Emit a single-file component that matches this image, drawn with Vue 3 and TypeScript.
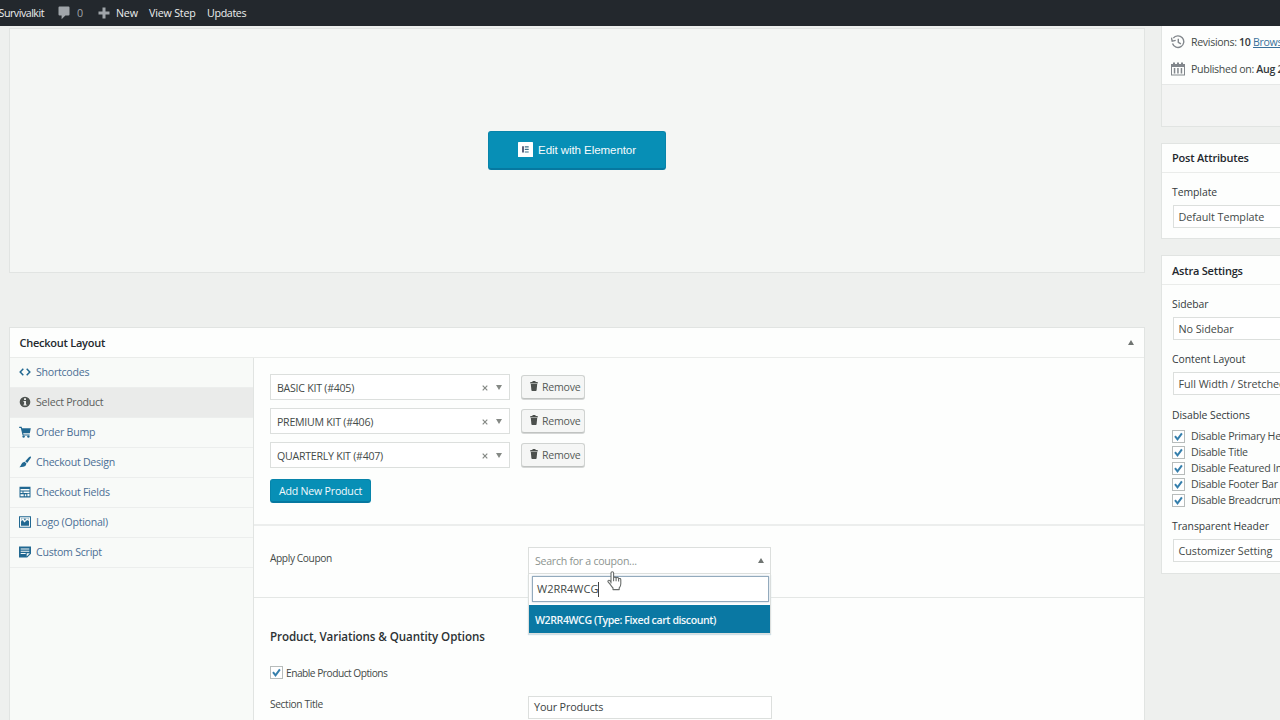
<script setup lang="ts">
interface Tab { label: string; icon: string; active?: boolean }

const tabs: Tab[] = [
  { label: 'Shortcodes', icon: 'code' },
  { label: 'Select Product', icon: 'info', active: true },
  { label: 'Order Bump', icon: 'cart' },
  { label: 'Checkout Design', icon: 'brush' },
  { label: 'Checkout Fields', icon: 'fields' },
  { label: 'Logo (Optional)', icon: 'image' },
  { label: 'Custom Script', icon: 'script' },
]
const products: string[] = ['BASIC KIT (#405)', 'PREMIUM KIT (#406)', 'QUARTERLY KIT (#407)']
const disabled: string[] = [
  'Disable Primary Header',
  'Disable Title',
  'Disable Featured Image',
  'Disable Footer Bar',
  'Disable Breadcrumb',
]
</script>

<template>
  <div class="screen">
    <header class="bar">
      <span class="site">Survivalkit</span>
      <svg class="bubble" viewBox="0 0 12 14"><path d="M1.5 0.5h9q1 0 1 1v7q0 1-1 1H7.4L3.6 13.3V9.5H1.5q-1 0-1-1v-7q0-1 1-1z" fill="#a0a5aa" /></svg>
      <span class="count">0</span>
      <svg class="plus" viewBox="0 0 12 12"><path d="M4.5 0.5h3v4h4v3h-4v4h-3v-4h-4v-3h4z" fill="#a0a5aa" /></svg>
      <span class="new">New</span>
      <span class="view">View Step</span>
      <span class="upd">Updates</span>
    </header>

    <div class="page">
      <main class="main">
        <section class="editor">
          <button class="elementor">
            <svg width="15" height="15" viewBox="0 0 15 15"><rect width="15" height="15" rx="0.6" fill="#fff" /><path d="M5 4.2v6.4" stroke="#272d50" stroke-width="1.5" /><path d="M6.8 4.8h3.9M6.8 7.4h3.9M6.8 10h3.9" stroke="#3c6f88" stroke-width="1.2" /></svg>
            <span>Edit with Elementor</span>
          </button>
        </section>

        <section class="checkout">
          <div class="box-head">
            <h2>Checkout Layout</h2>
            <i class="tri up"></i>
          </div>
          <div class="checkout-body">
            <nav class="tabs">
              <a v-for="t in tabs" :key="t.label" class="tab" :class="{ active: t.active }">
                <svg viewBox="0 0 12 12" fill="currentColor">
                  <path v-if="t.icon === 'code'" d="M4.3 2.8 1.2 6l3.1 3.2M7.7 2.8 10.8 6 7.7 9.2" fill="none" stroke="currentColor" stroke-width="1.5" />
                  <template v-else-if="t.icon === 'info'">
                    <circle cx="6" cy="6" r="5.3" /><path d="M5 2.3h2v1.6H5zM4.5 4.9H7v3.7h.7v1H4.4v-1h.7V5.9h-.6z" fill="#eaebea" />
                  </template>
                  <template v-else-if="t.icon === 'cart'">
                    <path d="M.2.8h2.4l.5 1.5h8.7l-1 5H4.2l.3 1.1h6.1v1.1H3.6L1.8 1.9H.2z" /><circle cx="4.6" cy="10.6" r="1.2" /><circle cx="9.4" cy="10.6" r="1.2" />
                  </template>
                  <path v-else-if="t.icon === 'brush'" d="M11.7.5q.7.6-.3 2.1L8.2 6.9 6.2 5.2 9.9 1.3q1.1-1.2 1.8-.8zM5.5 5.8l2 1.8q-.4 2.8-3.1 3.1-2 .3-4 .5 1.3-.9 1.8-2.6.7-2.4 3.3-2.8z" />
                  <path v-else-if="t.icon === 'fields'" fill-rule="evenodd" d="M.5.8h11v10.6H.5zM1.5 3v1.5h9V3zM1.5 5.6v1.5h2V5.6zM4.5 5.6v1.5h6V5.6zM1.5 8.2v2.1h3.2V8.2zM5.8 8.2v2.1h1.5V8.2zM8.4 7.7v2.6h2.1V7.7z" />
                  <path v-else-if="t.icon === 'image'" fill-rule="evenodd" d="M0 .3h12v11.5H0zM1 1.3v9.5h10V1.3zM2 2.2h8v7.6H2zM2.3 2.4v3l1.4-1.3 1.6 2.4 3-2.6 1.5 1.4V2.4zM5.2 2.8h1.4v1.4H5.2z" />
                  <path v-else fill-rule="evenodd" d="M0 .5h12v7.2L8.2 11.6H0zM1.7 2.5v1.1h8.6V2.5zM1.7 4.8v.9h8.6v-.9zM1.7 7v.9h5V7zM7.7 7.3v3.2l3.1-3.2z" />
                </svg>
                <span>{{ t.label }}</span>
              </a>
            </nav>

            <div class="content">
              <div class="products">
                <div v-for="p in products" :key="p" class="product">
                  <div class="select2">
                    <span class="value">{{ p }}</span>
                    <svg class="x" viewBox="0 0 6 6"><path d="M.7.7l4.6 4.6M5.3.7.7 5.3" stroke="#858985" stroke-width="1.2" /></svg>
                    <i class="tri down"></i>
                  </div>
                  <button class="remove">
                    <svg viewBox="0 0 8 10"><path d="M2.5 0h3v.9h2.2v1.5H.3V.9h2.2zM.8 3h6.4l-.6 6.2q-.1.8-.8.8H2.2q-.7 0-.8-.8z" fill="#4c504d" /></svg>
                    <span>Remove</span>
                  </button>
                </div>
                <button class="add"><span>Add New Product</span></button>
              </div>

              <div class="coupon">
                <label>Apply Coupon</label>
                <div class="combo">
                  <div class="combo-top"><span>Search for a coupon...</span><i class="tri up"></i></div>
                  <div class="dropdown">
                    <div class="search"><span>W2RR4WCG</span><i class="caret"></i></div>
                    <div class="option"><span>W2RR4WCG (Type: Fixed cart discount)</span></div>
                  </div>
                  <svg class="hand" viewBox="0 0 15 20"><path d="M4 12V2.1Q4 .7 5.3.7t1.3 1.4v5q0-1 1.2-1t1.3 1.1q.2-.8 1.2-.8 1.2 0 1.3 1.2 2-.6 2.2 1.1v4.1q0 2.6-1.6 4.2v1.6H6v-1.6Q4.6 15.5 3.2 13.4L.9 10.6Q.7 9.4 1.8 9.2T4 11zM6.6 7v3.3M9.1 7.3v3M11.6 7.8v2.6" fill="#fff" stroke="#696d6b" stroke-width="1.1" stroke-linejoin="round" /></svg>
                </div>
              </div>

              <div class="options">
                <h3>Product, Variations &amp; Quantity Options</h3>
                <div class="enable">
                  <b class="check"><svg viewBox="0 0 11 11"><path d="M2 5.2l2.5 3.2L8.9 2.4" /></svg></b>
                  <span>Enable Product Options</span>
                </div>
                <div class="title-row">
                  <label>Section Title</label>
                  <div class="input"><span>Your Products</span></div>
                </div>
              </div>
            </div>
          </div>
        </section>
      </main>

      <aside class="side">
        <section class="publish">
          <div class="rows">
            <div class="meta">
              <svg viewBox="0 0 14 14"><path d="M2.3 3.2A5.8 5.8 0 1 1 1.5 8.6M.4 2.6l.8 3.5 3.5-.7M7.3 3.7v3.6l2.6 1.6" fill="none" stroke="#82878c" stroke-width="1.4" /></svg>
              <span class="rev">Revisions: <strong>10</strong> <a>Browse</a></span>
            </div>
            <div class="meta">
              <svg viewBox="0 0 14 14"><path fill-rule="evenodd" d="M0 2h2V.5h2V2h2V.5h2V2h2V.5h2V2h2v11.5H0zM1 5v7.5h12V5zM2.8 6h1.5v5.5H2.8zM6.2 6h1.5v5.5H6.2zM9.7 6h1.5v5.5H9.7z" fill="#82878c" /></svg>
              <span class="pub">Published on: <strong>Aug 2</strong></span>
            </div>
          </div>
        </section>

        <section class="box attributes">
          <h2>Post Attributes</h2>
          <div class="box-body">
            <h4>Template</h4>
            <div class="select"><span>Default Template</span></div>
          </div>
        </section>

        <section class="box astra">
          <h2>Astra Settings</h2>
          <div class="box-body">
            <h4>Sidebar</h4>
            <div class="select"><span>No Sidebar</span></div>
            <h4>Content Layout</h4>
            <div class="select layout"><span>Full Width / Stretched</span></div>
            <h4>Disable Sections</h4>
            <ul>
              <li v-for="d in disabled" :key="d">
                <b class="check"><svg viewBox="0 0 11 11"><path d="M2 5.2l2.5 3.2L8.9 2.4" /></svg></b>
                <span>{{ d }}</span>
              </li>
            </ul>
            <h4>Transparent Header</h4>
            <div class="select"><span>Customizer Setting</span></div>
          </div>
        </section>
      </aside>
    </div>
  </div>
</template>

<style>
html, body { margin: 0; overflow: hidden; }
</style>

<style scoped>
* { box-sizing: border-box; }
.screen {
  width: 1280px; height: 720px; overflow: hidden; display: flex; flex-direction: column;
  background: #eef0ee; color: #444a48; white-space: nowrap;
  font: 10.6px/16px "Open Sans", "Noto Sans", sans-serif; letter-spacing: -0.25px;
}
h2, h3, h4, ul { margin: 0; padding: 0; list-style: none; }
svg { display: block; flex: none; }
button { font: inherit; letter-spacing: inherit; margin: 0; padding: 0; }

.bar { flex: none; height: 26px; background: #23282d; color: #eceeee; display: flex; align-items: center; font-size: 10.7px; font-weight: 500; letter-spacing: -0.2px; }
.bar span { flex: none; }
.site { display: flex; justify-content: flex-end; width: 44px; letter-spacing: -0.5px; }
.bubble { width: 12px; height: 14px; margin-left: 14px; }
.bar .count { width: 21px; margin-left: 7px; color: #a0a5aa; font-weight: 400; }
.plus { width: 12px; height: 12px; }
.new { width: 33px; margin-left: 6px; }
.view { width: 58px; }
.upd { letter-spacing: -0.35px; }

.page { flex: 1; min-height: 0; display: flex; gap: 16px; padding-left: 9px; }
.main { width: 1136px; flex: none; padding-top: 2px; display: flex; flex-direction: column; gap: 54px; }
.editor { flex: none; height: 245px; border: 1px solid #e1e4e2; background: #f4f6f4; display: flex; justify-content: center; align-items: flex-start; padding-top: 102px; }
.elementor {
  width: 178px; height: 39px; border: 1px solid #0784aa; border-bottom: 2px solid #0678a0; border-radius: 3px;
  background: #078fb6; color: #f5fbfd; font: 11.6px/16px "Liberation Sans", sans-serif; letter-spacing: -0.1px;
  display: flex; align-items: center; justify-content: center; gap: 5px;
}
.elementor svg { margin-top: -2px; }

.checkout { flex: 1; min-height: 0; border: 1px solid #e1e4e2; border-bottom: 0; background: #fdfefd; display: flex; flex-direction: column; }
.box-head { flex: none; height: 30px; border-bottom: 1px solid #eaecea; display: flex; align-items: center; justify-content: space-between; padding: 0 10px 0 10px; }
h2 { font-size: 11px; line-height: 16px; font-weight: 600; color: #23282d; }
.box-head h2 { margin-left: -0.5px; }
.tri { width: 0; height: 0; border: 3.5px solid transparent; flex: none; }
.tri.up { border-top: 0; border-bottom: 5px solid #707572; }
.tri.down { border-bottom: 0; border-top: 5px solid #858985; }
.checkout-body { flex: 1; min-height: 0; display: flex; }
.tabs { width: 244px; flex: none; background: #f8faf8; border-right: 1px solid #e1e4e2; }
.tab { height: 30px; border-bottom: 1px solid #eceeed; display: flex; align-items: center; gap: 5px; padding: 0 0 1px 9px; color: #4b6f95; }
.tab svg { width: 12px; height: 12px; color: #216891; }
.tab.active { background: #eaebea; color: #5b605d; }
.tab.active svg { color: #4d524f; }

.content { flex: 1; min-width: 0; }
.products { height: 168px; border-bottom: 2px solid #eceeed; padding: 16px 0 0 16px; }
.product { display: flex; align-items: center; gap: 12px; height: 26px; margin-bottom: 8px; }
.select2 { width: 240px; height: 26px; border: 1px solid #dcdfdd; background: #fff; display: flex; align-items: center; padding: 2px 7px 0 6px; }
.select2 .value { flex: 1; }
.select2 .x { width: 6px; height: 6px; margin-right: 8px; }
.select2 .tri { margin-top: -1px; }
.remove {
  width: 64px; height: 24px; border: 1px solid #d0d3d1; border-bottom-color: #c0c3c1; border-radius: 3px; background: #f5f6f5;
  box-shadow: 0 1px 0 #d5d7d6; color: #565b58; display: flex; align-items: center; padding-left: 8px; gap: 4px; margin-left: -1px;
}
.remove svg { width: 8px; height: 10px; margin-top: -3px; }
.add { margin-top: 3px; width: 101px; height: 24px; border: 1px solid #0784aa; border-bottom: 2px solid #0678a0; border-radius: 3px; background: #078fb6; color: #f2fafd; letter-spacing: -0.2px; }

.coupon { height: 72px; border-bottom: 1px solid #e4e7e5; padding: 21px 0 0 16px; display: flex; font-size: 10.2px; letter-spacing: -0.4px; }
.coupon label { width: 258px; line-height: 23px; }
.combo { position: relative; width: 243px; height: 87px; font-size: 10.6px; letter-spacing: -0.27px; }
.combo-top { height: 27px; border: 1px solid #dcdfdd; background: #fff; display: flex; align-items: center; justify-content: space-between; padding: 1px 6px 0 6px; color: #8d9490; }
.combo-top .tri { margin-top: -1px; }
.dropdown { height: 60px; border: 1px solid #dcdfdd; border-top: 0; background: #fff; display: flex; flex-direction: column; box-shadow: 0 1px 1px #cfe0e8; }
.search { margin: 2px 1px 3px 3px; height: 26px; flex: none; border: 1.5px solid #93aabd; background: #fff; display: flex; align-items: center; padding-left: 4px; box-shadow: 0 0 2px #b9c8d4; font-size: 11px; letter-spacing: 0; }
.caret { width: 1px; height: 15px; background: #444; }
.option { flex: 1; background: #0a78a3; color: #f2f9fc; font-weight: 600; letter-spacing: -0.43px; display: flex; align-items: center; padding-left: 6px; }
.option span { padding-top: 1px; }
.hand { position: absolute; left: 79px; top: 24px; width: 15px; height: 20px; }

.options { padding: 31px 0 0 16px; font-size: 10.2px; letter-spacing: -0.5px; }
h3 { font-size: 11.6px; line-height: 16px; font-weight: 600; color: #2c3234; letter-spacing: -0.09px; }
.enable { display: flex; align-items: center; gap: 3px; margin-top: 20px; height: 16px; }
.enable .check { margin-top: -1px; }
.title-row { display: flex; align-items: flex-start; margin-top: 15px; }
.title-row label { width: 258px; line-height: 17px; letter-spacing: -0.36px; }
.input { width: 244px; height: 23px; border: 1px solid #dcdfdd; background: #fff; padding: 2px 0 0 5px; font-size: 10.8px; letter-spacing: -0.15px; color: #3c4244; }
.check { flex: none; width: 13px; height: 13px; border: 1px solid #b7bcbb; background: #fff; display: block; }
.check svg { width: 11px; height: 11px; }
.check path { fill: none; stroke: #357fac; stroke-width: 2; }

.side { flex: none; width: 300px; }
.publish { height: 101px; border: 1px solid #e1e4e2; border-top: 0; background: #f3f4f3; }
.rows { height: 59px; background: #fdfefd; border-bottom: 1px solid #e6e8e7; padding: 2px 0 0 9px; }
.meta { height: 27.5px; display: flex; align-items: center; gap: 6px; letter-spacing: -0.32px; }
.meta svg { width: 14px; height: 14px; }
.meta strong { font-weight: 600; color: #34393c; }
.meta a { color: #3b719b; text-decoration: underline; }
.box { border: 1px solid #e1e4e2; background: #fdfefd; margin-top: 16px; }
.box h2 { height: 29px; line-height: 29px; padding-left: 10px; border-bottom: 1px solid #eaecea; letter-spacing: -0.2px; }
.attributes h2 { line-height: 28px; }
.box-body { padding-left: 10px; }
h4 { font-size: 10.4px; line-height: 16px; font-weight: 500; color: #343a3c; letter-spacing: -0.05px; }
.attributes { height: 96px; }
.attributes .box-body { padding-top: 11px; }
.astra { height: 319px; }
.astra .box-body { padding-top: 11px; }
.select { margin: 5px 0 11px 1px; height: 23px; border: 1px solid #dcdfdd; background: #fff; padding-left: 4.5px; line-height: 21px; font-size: 10.8px; letter-spacing: -0.06px; }
.layout { margin-bottom: 12px; }
ul { margin: 5px 0 10px; }
li { display: flex; align-items: center; gap: 6px; height: 16px; }
</style>
